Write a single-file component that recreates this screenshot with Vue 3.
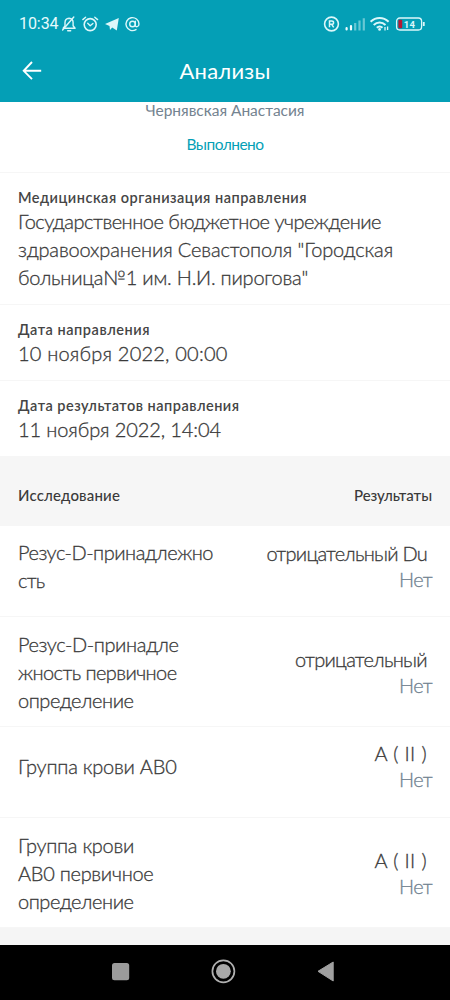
<script setup>
const sections = [
  {
    label: ['Медицинская организация направления', 289],
    lines: [
      ['Государственное бюджетное учреждение', 363],
      ['здравоохранения Севастополя "Городская', 375],
      ['больница№1 им. Н.И. пирогова"', 290],
    ],
  },
  { label: ['Дата направления', 132], lines: [['10 ноября 2022, 00:00', 209.5]] },
  { label: ['Дата результатов направления', 221.5], lines: [['11 ноября 2022, 14:04', 203]] },
]

const rows = [
  {
    name: [['Резус-D-принадлежно', 195], ['сть', 26.5]],
    value: ['отрицательный Du', 160.5],
  },
  {
    name: [['Резус-D-принадле', 160.5], ['жность первичное', 158.5], ['определение', 115.5]],
    value: ['отрицательный', 132],
  },
  { name: [['Группа крови AB0', 158.5]], value: ['A ( II )', 52.5] },
  {
    name: [['Группа крови', 116], ['AB0 первичное', 135.5], ['определение', 115.5]],
    value: ['A ( II )', 52.5],
  },
]

const vFit = {
  mounted(el, { value }) {
    const natural = el.getBoundingClientRect().width
    el.style.letterSpacing = `${(value - natural) / el.textContent.length}px`
  },
}
</script>

<template>
  <div class="screen">
    <header class="top">
      <div class="status">
        <span v-fit="39.5" class="clock">10:34</span>
        <svg class="st-left" width="82" height="20" viewBox="0 0 82 20" fill="none" stroke="#dcf7fa" stroke-width="1.4" stroke-linecap="round" stroke-linejoin="round">
          <path d="M3.2 14.2h11.9l-2-2.4V8.6c0-2.6-1.6-4.2-4-4.4-2.4.2-4.1 1.8-4.1 4.4v3.2zM7.7 16.8h3" />
          <path d="M2.6 16 13.8 3" />
          <circle cx="30.2" cy="10.6" r="6" stroke-width="1.6" />
          <path d="m27.7 9.3 2.5 2.4 2.7-2.2M22.8 5.6l2.8-2.4M37.6 5.6l-2.8-2.4" />
          <path d="M45 10 58.8 4l-2 12.4-4.6-2.9-2.2 2.5-.5-4z" fill="#dcf7fa" stroke="none" />
          <circle cx="72.5" cy="10" r="2.8" />
          <path d="M75.3 7.2v4c0 2.4 3.7 2 3.7-1.3a6.5 6.5 0 1 0-3 5.7" />
        </svg>
        <svg class="st-right" width="106" height="20" viewBox="0 0 106 20" fill="none" stroke="#dcf7fa">
          <circle cx="11.5" cy="10" r="6.9" stroke-width="1.6" />
          <path d="M9.5 13.3V7h2.2c2.5 0 2.5 3.3 0 3.3H9.5m2.2 0 2 3" stroke-width="1.5" />
          <path d="M26.6 15.4v-1.2M31 15.4v-3.3" stroke="#effcff" stroke-width="2.2" stroke-linecap="round" />
          <path d="M35.2 16.4V9M39.5 16.4V6.5M43.8 16.4V4.2" stroke="#69c8d4" stroke-width="2.2" />
          <path d="M50.6 7.8c5.3-5 12.7-5 18 0M53.7 11c3.5-3.4 8.3-3.4 11.8 0M56.8 13.8c1.7-1.6 4-1.6 5.7 0" stroke-width="2" />
          <circle cx="59.6" cy="15.4" r="1.4" fill="#dcf7fa" stroke="none" />
          <path d="M65 13v3.5M67.6 12.5V16" stroke-width="1.3" />
          <rect x="76.6" y="4" width="25" height="12" rx="3.2" stroke-width="1.3" />
          <rect x="78.4" y="5.7" width="3.8" height="8.6" rx="1" fill="#b31935" stroke="none" />
          <path d="M103.8 8v4" stroke-width="1.8" />
          <text x="83.8" y="13.5" class="pct">14</text>
        </svg>
      </div>
      <div class="bar">
        <svg class="back" width="22" height="22" viewBox="0 0 22 22" fill="none" stroke="#fff" stroke-width="1.9">
          <path d="M20.2 10.8H3M11 2 2.7 10.8l8.3 8.4" />
        </svg>
        <h1><span v-fit="91">Анализы</span></h1>
      </div>
    </header>

    <main>
      <section class="summary">
        <div class="person"><span v-fit="159">Чернявская Анастасия</span></div>
        <div class="state"><span v-fit="77">Выполнено</span></div>
      </section>

      <section v-for="s in sections" :key="s.label[0]" class="info">
        <div class="label"><span v-fit="s.label[1]">{{ s.label[0] }}</span></div>
        <div v-for="l in s.lines" :key="l[0]" class="line"><span v-fit="l[1]">{{ l[0] }}</span></div>
      </section>

      <div class="head">
        <span v-fit="102">Исследование</span>
        <span v-fit="78">Результаты</span>
      </div>

      <section v-for="(r, i) in rows" :key="i" class="row" :class="{ short: r.name.length < 3 }">
        <div class="name">
          <div v-for="l in r.name" :key="l[0]" class="line"><span v-fit="l[1]">{{ l[0] }}</span></div>
        </div>
        <div class="result">
          <div class="value"><span v-fit="r.value[1]">{{ r.value[0] }}</span></div>
          <div class="norm"><span v-fit="33">Нет</span></div>
        </div>
      </section>
    </main>

    <nav>
      <svg width="450" height="55" viewBox="0 0 450 55">
        <rect x="112" y="18" width="17.2" height="17.2" rx="2.5" fill="#9b9b9b" />
        <circle cx="223.4" cy="26.3" r="11" fill="none" stroke="#b0b0b0" stroke-width="1.7" />
        <circle cx="223.4" cy="26.3" r="7.4" fill="#a8a8a8" />
        <path d="M318 26.3 333.2 17v19z" fill="#a0a0a0" stroke="#a0a0a0" stroke-linejoin="round" />
      </svg>
    </nav>
  </div>
</template>

<style>
body {
  margin: 0;
}
</style>

<style scoped>
.screen {
  width: 450px;
  height: 1000px;
  display: flex;
  flex-direction: column;
  background: #fff;
  color: #3a3a3a;
  font-family: Lato, "Open Sans", sans-serif;
  font-size: 20px;
  font-weight: 300;
  white-space: pre;
}
.top {
  height: 102px;
  flex: none;
  background: #049fb6;
  color: #fff;
}
.status {
  height: 40px;
  display: flex;
  align-items: center;
  padding: 7px 24px 0 19px;
  box-sizing: border-box;
  color: #e6fbfd;
}
.clock {
  font: 16px/20px Roboto, sans-serif;
}
.st-left {
  flex: none;
  margin-left: 1px;
}
.st-right {
  flex: none;
  margin-left: auto;
}
.pct {
  font: bold 9.5px Roboto, sans-serif;
  letter-spacing: 0.3px;
  fill: #dcf7fa;
  stroke: none;
}
.bar {
  height: 61px;
  display: grid;
  grid-template-columns: 60px 1fr 60px;
  align-items: center;
}
.back {
  margin-left: 21px;
}
h1 {
  margin: 0;
  text-align: center;
  font-size: 22px;
  font-weight: 400;
  line-height: 30px;
}
main {
  height: 843px;
  flex: none;
  background: #f5f5f5;
}
.summary,
.info,
.row {
  background: #fff;
  border-bottom: 1px solid #f6f6f6;
  box-sizing: border-box;
}
.summary {
  height: 71px;
  text-align: center;
  font-size: 15.5px;
  font-weight: 400;
}
.person {
  height: 16px;
  line-height: 16px;
  color: #748390;
}
.state {
  margin-top: 16px;
  line-height: 20px;
  color: #049fb6;
}
.info {
  padding: 15px 18px 13px;
}
.label {
  height: 19px;
  line-height: 20px;
  font-size: 14.5px;
  font-weight: 600;
  color: #454545;
}
.line {
  height: 28px;
  line-height: 28px;
}
.line,
.result {
  -webkit-text-stroke: 0.3px currentColor;
}
.head {
  height: 69px;
  padding: 7px 18px 0;
  box-sizing: border-box;
  display: flex;
  align-items: center;
  justify-content: space-between;
  background: #f6f6f6;
  font-size: 15px;
  font-weight: 500;
}
.row {
  min-height: 91px;
  padding: 13px 18px 12px;
  display: flex;
  justify-content: space-between;
  align-items: center;
}
.row.short {
  padding: 11px 18px 23px;
}
.row.short:first-of-type,
.head + .row.short {
  padding: 12px 18px 22px;
}
.result {
  text-align: right;
  line-height: 26px;
}
.value {
  padding-right: 5px;
}
.norm {
  color: #728391;
}
nav {
  height: 55px;
  background: #000;
}
nav svg {
  display: block;
}
</style>
